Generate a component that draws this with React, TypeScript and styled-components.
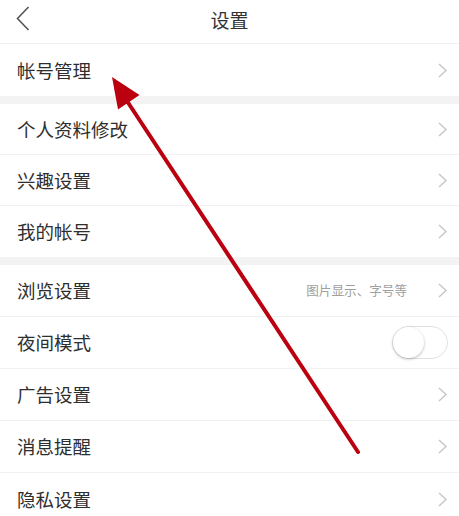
import React from "react";
import styled, { createGlobalStyle } from "styled-components";

const Global = createGlobalStyle`
  html, body { margin: 0; padding: 0; background: #ffffff; }
  body { font-family: "Noto Sans CJK SC", "Noto Sans", sans-serif; -webkit-font-smoothing: antialiased; }
`;

const Page = styled.div`
  position: relative;
  width: 459px;
  height: 516px;
  overflow: hidden;
  background: #ffffff;
  display: flex;
  flex-direction: column;
`;

const Header = styled.header`
  height: 44px;
  box-sizing: border-box;
  flex: none;
  display: grid;
  grid-template-columns: 60px 1fr 60px;
  align-items: center;
  border-bottom: 1px solid #f0f0f0;
`;

const BackButton = styled.div`
  display: flex;
  align-items: center;
  padding-left: 16px;
  padding-bottom: 6px;
`;

const Title = styled.h1`
  margin: 0;
  text-align: center;
  font-size: 19px;
  font-weight: 400;
  color: #333333;
  line-height: 1;
  padding-bottom: 4px;
`;

const Group = styled.section`
  display: flex;
  flex-direction: column;
  flex: none;
`;

const Band = styled.div`
  height: 8px;
  flex: none;
  background: #f3f3f3;
`;

const Row = styled.div<{ $last?: boolean; $h: number }>`
  height: ${(p) => p.$h}px;
  box-sizing: border-box;
  display: flex;
  align-items: center;
  padding: 0 12px 0 17px;
  border-bottom: ${(p) => (p.$last ? "none" : "1px solid #f1f1f1")};
`;

const Label = styled.span`
  flex: 1;
  font-size: 18.5px;
  color: #2e2e2e;
  line-height: 1;
`;

const Hint = styled.span`
  font-size: 12.6px;
  color: #a0a0a0;
  margin-right: 31px;
  line-height: 1;
`;

const Toggle = styled.div`
  width: 56px;
  height: 33px;
  box-sizing: border-box;
  border-radius: 17px;
  border: 1px solid #e2e2e2;
  background: #ffffff;
  display: flex;
  align-items: center;
  margin-right: -1px;
`;

const Knob = styled.div`
  width: 31px;
  height: 31px;
  border-radius: 50%;
  background: #ffffff;
  box-shadow: 0 1px 3px rgba(0, 0, 0, 0.28);
`;

const Overlay = styled.svg`
  position: absolute;
  left: 0;
  top: 0;
  pointer-events: none;
`;

const Chevron = () => (
  <svg width="9" height="15" viewBox="0 0 9 15">
    <polyline points="1,1 8,7.5 1,14" fill="none" stroke="#c6c6c6" strokeWidth="1.4" />
  </svg>
);

const BackIcon = () => (
  <svg width="14" height="25" viewBox="0 0 14 25">
    <polyline points="12.5,1 1.5,12.5 12.5,24" fill="none" stroke="#555555" strokeWidth="1.6" />
  </svg>
);

type Item = { label: string; hint?: string; toggle?: boolean };
type GroupDef = { rowHeight: number; items: Item[] };

const groups: GroupDef[] = [
  { rowHeight: 52, items: [{ label: "帐号管理" }] },
  { rowHeight: 51, items: [{ label: "个人资料修改" }, { label: "兴趣设置" }, { label: "我的帐号" }] },
  {
    rowHeight: 52,
    items: [
      { label: "浏览设置", hint: "图片显示、字号等" },
      { label: "夜间模式", toggle: true },
      { label: "广告设置" },
      { label: "消息提醒" },
      { label: "隐私设置" },
    ],
  },
];

export default function App() {
  return (
    <>
      <Global />
      <Page>
        <Header>
          <BackButton>
            <BackIcon />
          </BackButton>
          <Title>设置</Title>
          <div />
        </Header>
        {groups.map((g, gi) => (
          <React.Fragment key={gi}>
            {gi > 0 && <Band />}
            <Group>
              {g.items.map((item, i) => (
                <Row key={item.label} $h={g.rowHeight} $last={i === g.items.length - 1}>
                  <Label>{item.label}</Label>
                  {item.hint && <Hint>{item.hint}</Hint>}
                  {item.toggle ? (
                    <Toggle>
                      <Knob />
                    </Toggle>
                  ) : (
                    <Chevron />
                  )}
                </Row>
              ))}
            </Group>
          </React.Fragment>
        ))}
        <Overlay width="459" height="516" viewBox="0 0 459 516">
          <line x1="358" y1="452" x2="127" y2="101" stroke="#bb000f" strokeWidth="4" strokeLinecap="round" />
          <polygon points="112,77 139.5,95 118,109.5" fill="#bb000f" />
        </Overlay>
      </Page>
    </>
  );
}
